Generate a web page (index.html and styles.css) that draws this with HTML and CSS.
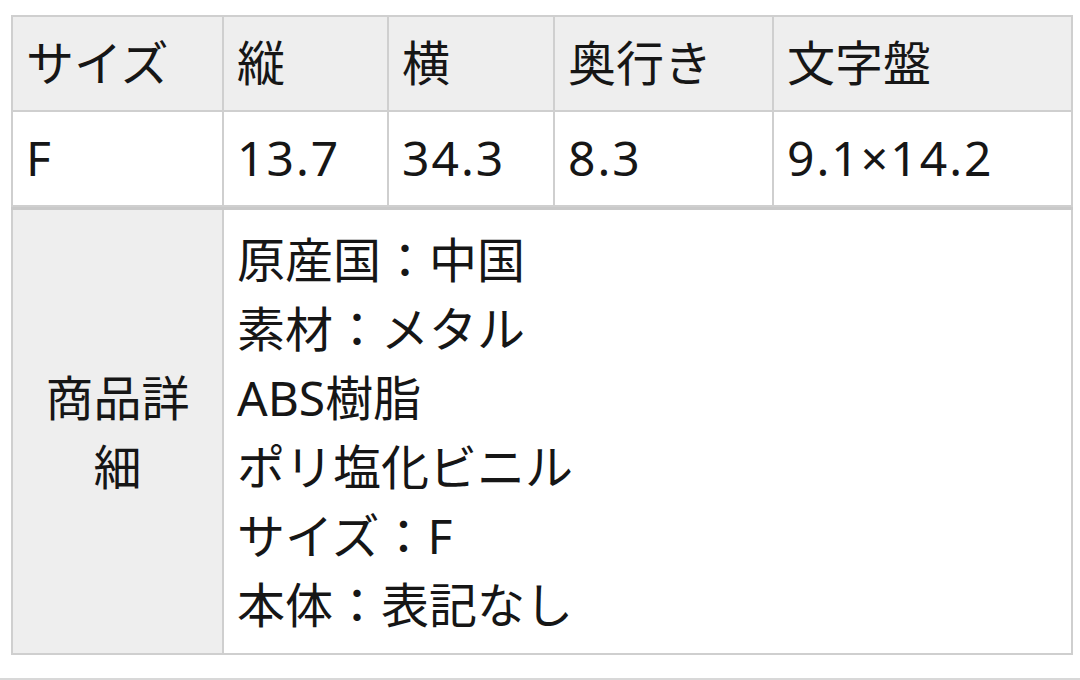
FILE: index.html
```html
<!DOCTYPE html>
<html lang="ja">
<head>
<meta charset="utf-8">
<link rel="stylesheet" href="styles.css">
</head>
<body>
<div class="page">
  <table class="spec">
    <colgroup>
      <col class="c1"><col class="c2"><col class="c3"><col class="c4"><col class="c5">
    </colgroup>
    <thead>
      <tr>
        <th>サイズ</th><th>縦</th><th>横</th><th>奥行き</th><th>文字盤</th>
      </tr>
    </thead>
    <tbody>
      <tr>
        <td>F</td><td class="num">13.7</td><td class="num">34.3</td><td class="num">8.3</td><td class="num">9.1×14.2</td>
      </tr>
    </tbody>
  </table>
  <table class="detail">
    <colgroup>
      <col class="c1"><col>
    </colgroup>
    <tbody>
      <tr>
        <th class="label">商品詳細</th>
        <td class="lines">原産国：中国<br>素材：メタル<br>ABS樹脂<br>ポリ塩化ビニル<br>サイズ：F<br>本体：表記なし</td>
      </tr>
    </tbody>
  </table>
</div>
<div class="rule"></div>
</body>
</html>
```
FILE: styles.css
```css
html, body {
  margin: 0;
  padding: 0;
  background: #ffffff;
}
body {
  width: 1080px;
  height: 680px;
  overflow: hidden;
  font-family: "Noto Sans", "Noto Sans CJK JP", sans-serif;
  color: #161616;
}
.page {
  padding: 15px 7px 0 11px;
}
table {
  border-collapse: collapse;
  table-layout: fixed;
  width: 1062px;
  border: 2px solid #c9c9c9;
}
th, td {
  border: 2px solid #cfcfcf;
  font-size: 48px;
  font-weight: 400;
  line-height: 69px;
  text-align: left;
  padding: 11px 13px 13px 13px;
  vertical-align: middle;
}
.spec thead th {
  background: #eeeeee;
}
.spec td.num {
  letter-spacing: 2px;
}
.c1 { width: 211px; }
.c2 { width: 165px; }
.c3 { width: 166px; }
.c4 { width: 219px; }
.c5 { width: auto; }
.detail {
  border-top: 3px solid #c9c9c9;
}
.detail th.label {
  background: #eeeeee;
  text-align: center;
  padding: 0 15px;
}
.detail td.lines {
  padding: 15px 13px 14px 13px;
}
.rule {
  position: absolute;
  left: 0;
  top: 678px;
  width: 1080px;
  height: 0;
  border-top: 2px solid #d8d8d8;
}
```
